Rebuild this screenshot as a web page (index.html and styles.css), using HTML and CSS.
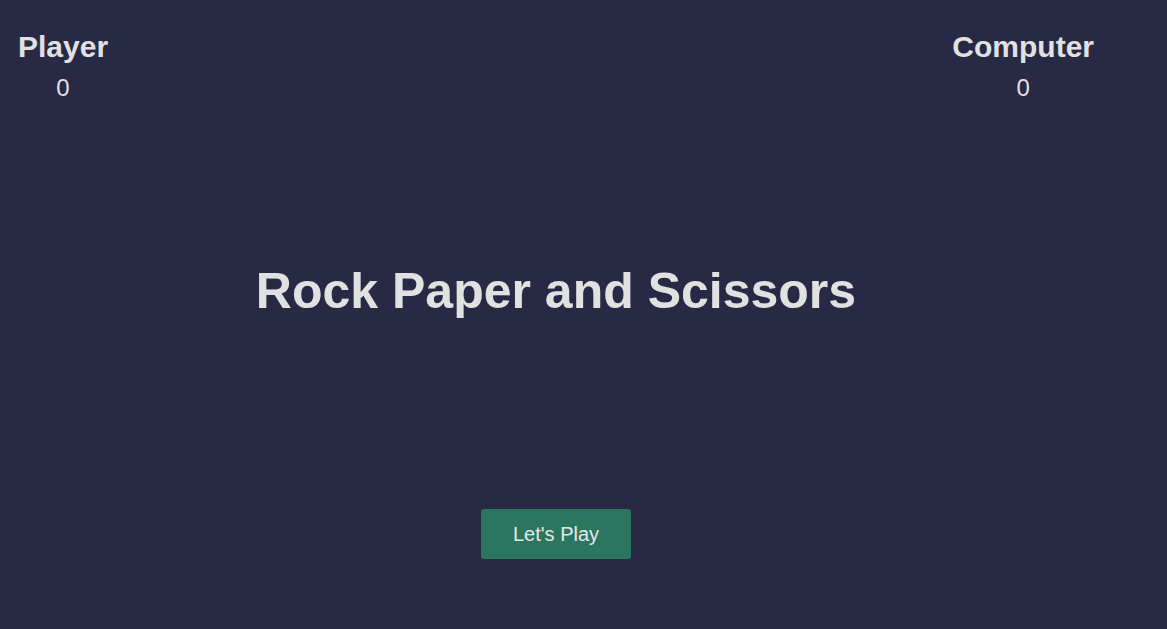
FILE: index.html
```html
<!DOCTYPE html>
<html lang="en">
<head>
<meta charset="utf-8">
<title>Rock Paper and Scissors</title>
<link rel="stylesheet" href="styles.css">
</head>
<body>
<div class="app">
  <header class="scores">
    <div class="score-col">
      <h2 class="score-name">Player</h2>
      <p class="score-value">0</p>
    </div>
    <div class="score-col">
      <h2 class="score-name">Computer</h2>
      <p class="score-value">0</p>
    </div>
  </header>
  <main class="intro">
    <h1 class="title">Rock Paper and Scissors</h1>
    <button class="play-btn">Let's Play</button>
  </main>
</div>
</body>
</html>
```
FILE: styles.css
```css
html, body {
  margin: 0;
  padding: 0;
  background: #282945;
  height: 100%;
}
body {
  font-family: "Liberation Sans", Arial, sans-serif;
  color: #e1e1e1;
}
.app {
  width: 1112px;
}
.scores {
  display: flex;
  justify-content: space-between;
  padding-top: 30px;
}
.score-col {
  padding: 0 18px;
  text-align: center;
}
.score-name {
  margin: 0;
  font-size: 30px;
  font-weight: bold;
  line-height: 34px;
}
.score-value {
  margin: 10px 0 0;
  font-size: 24px;
  line-height: 28px;
}
.intro {
  display: flex;
  flex-direction: column;
  align-items: center;
}
.title {
  margin: 161px 0 0;
  font-size: 50px;
  font-weight: bold;
  line-height: 57px;
}
.play-btn {
  margin-top: 189px;
  width: 150px;
  height: 50px;
  border: none;
  border-radius: 3px;
  background: #2c7660;
  color: #e6e6e6;
  font-family: "Liberation Sans", Arial, sans-serif;
  font-size: 20px;
  cursor: pointer;
}
```
